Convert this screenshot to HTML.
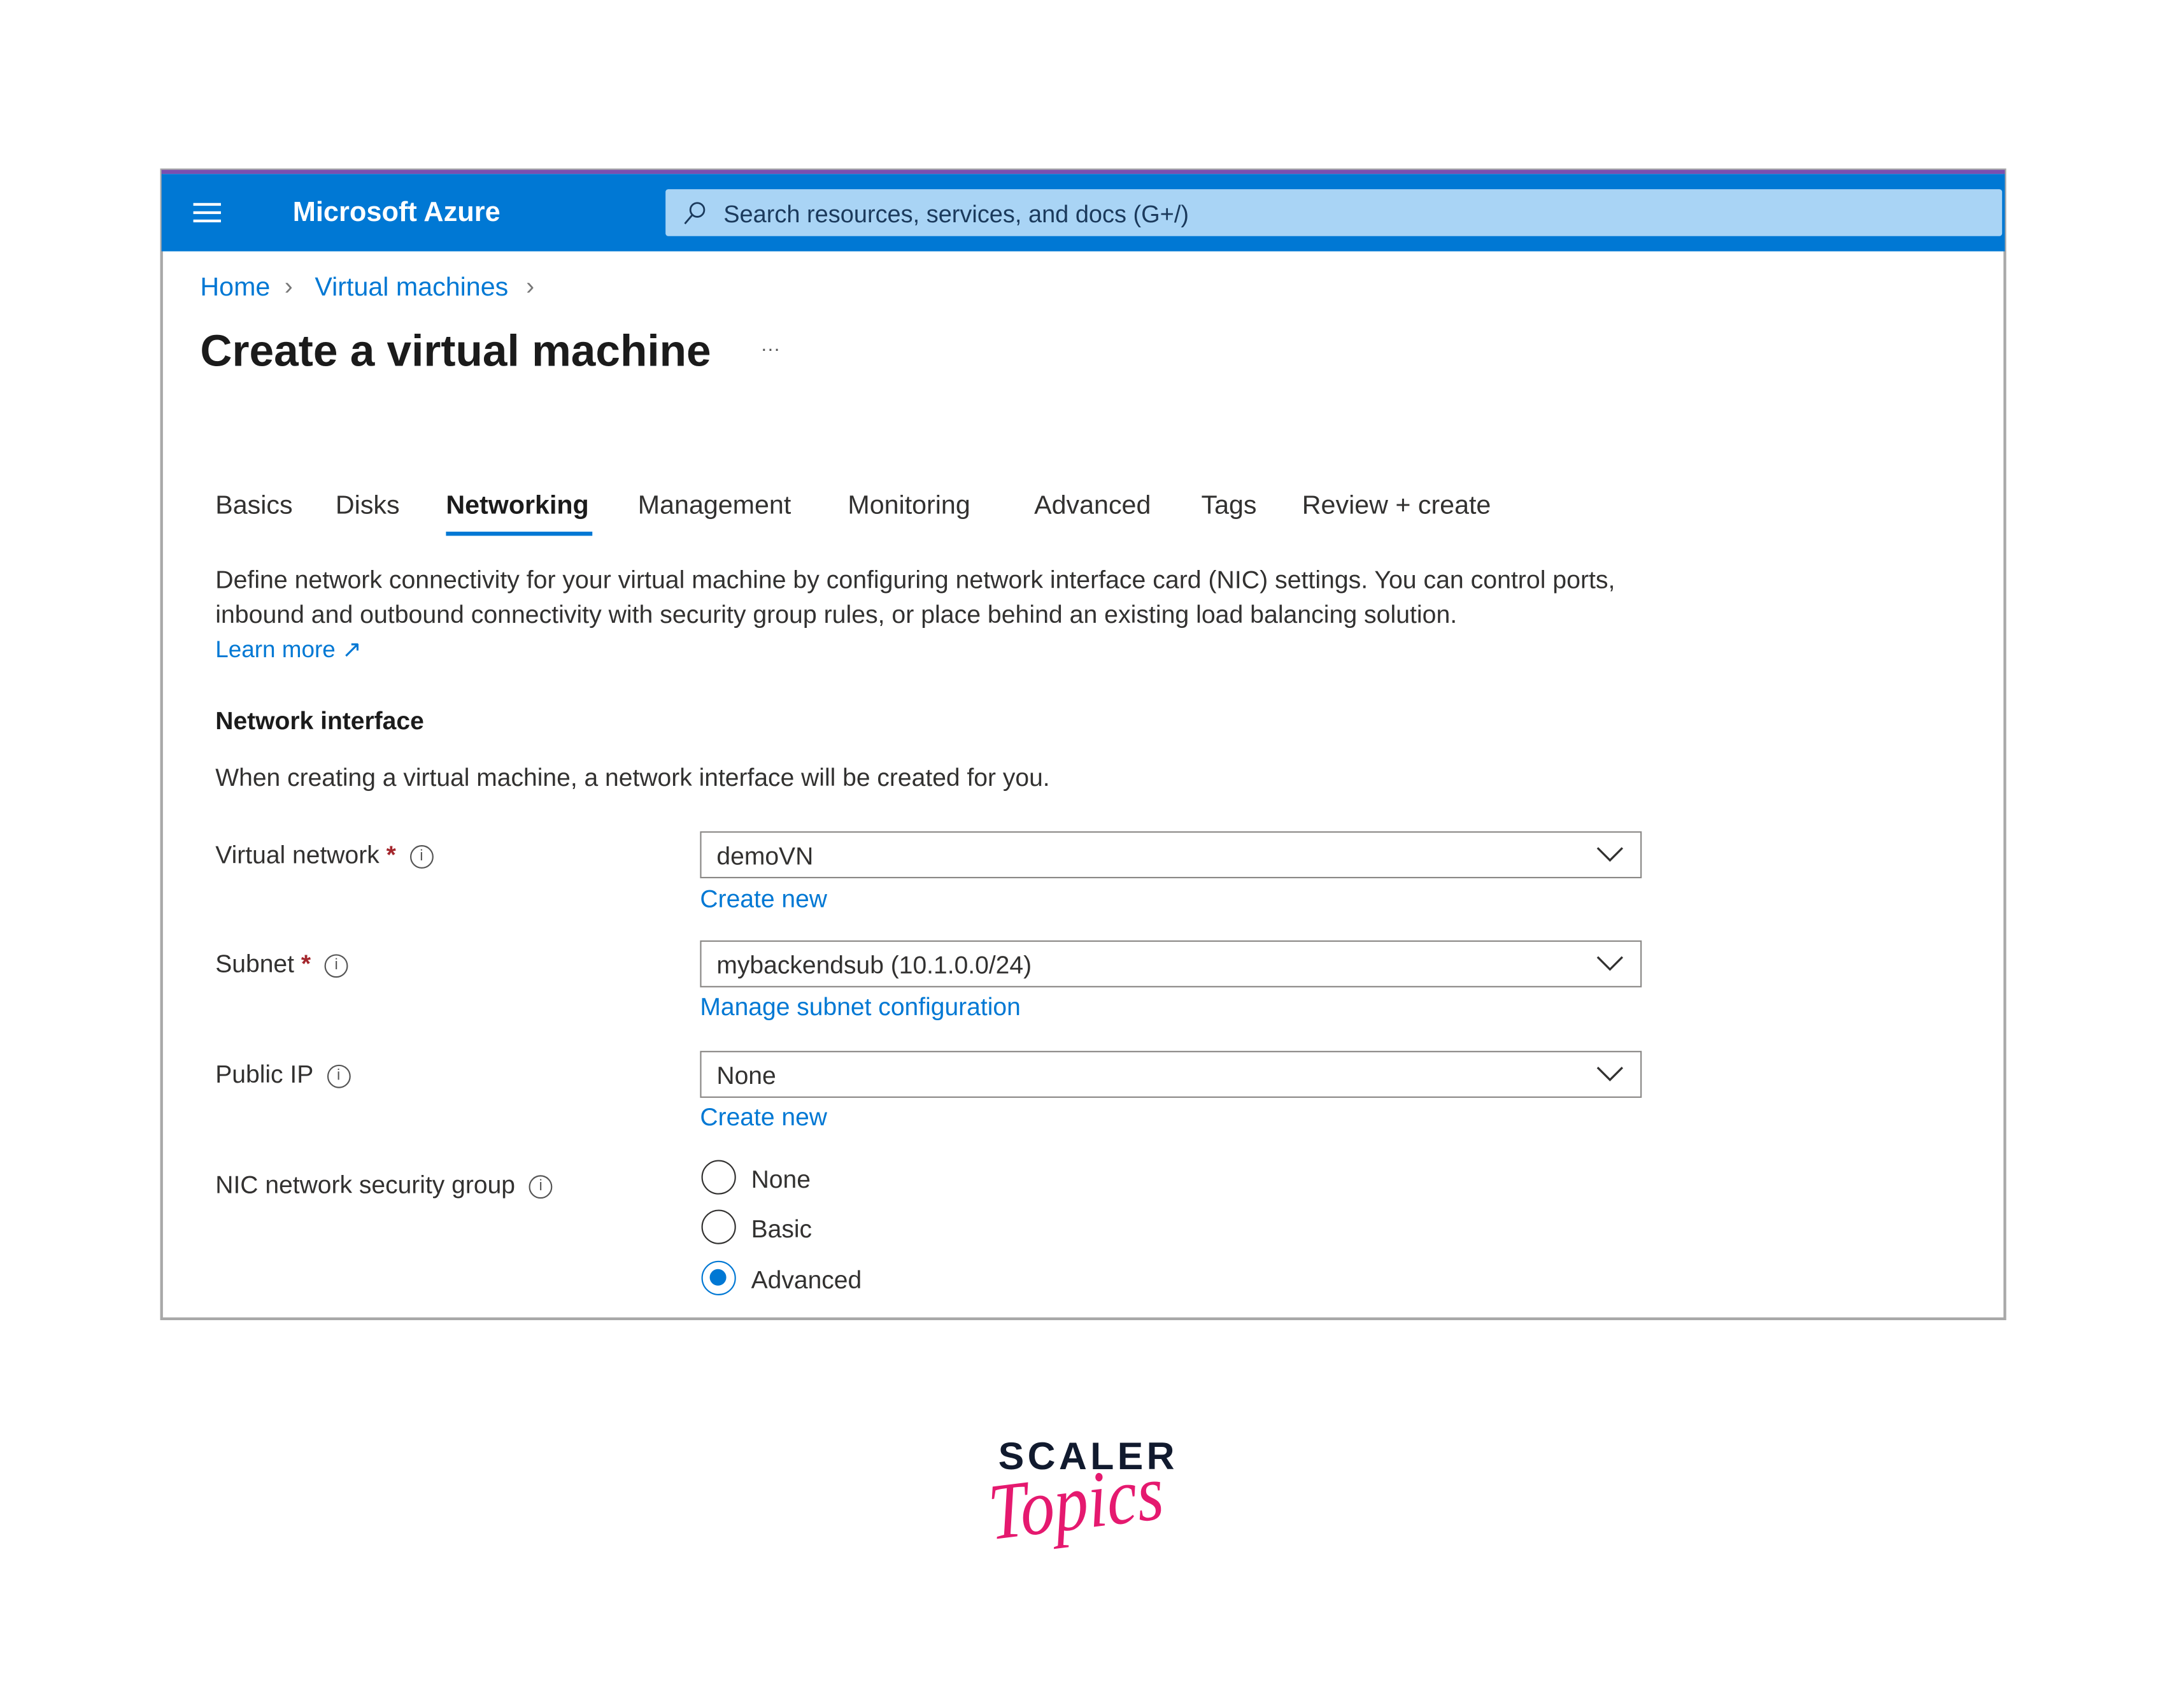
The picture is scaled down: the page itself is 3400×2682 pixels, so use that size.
<!DOCTYPE html>
<html><head><meta charset="utf-8"><style>
*{margin:0;padding:0;box-sizing:border-box}
body{width:3400px;height:2682px;background:#fff;overflow:hidden;font-family:"Liberation Sans",sans-serif}
#s{position:absolute;left:0;top:0;width:1568px;height:1237px;transform:scale(2.1684);transform-origin:0 0}
.a{position:absolute;white-space:nowrap}
.t{color:#323130;font-size:18px;line-height:1}
.l{color:#0078d4}
.dd{position:absolute;left:507px;width:682px;height:34px;border:1px solid #8a8886;background:#fff}
.dd span{position:absolute;left:11px;top:7px;font-size:18px;color:#323130}
.dd svg{position:absolute;right:12px;top:10px}
.ic{display:inline-block;width:17px;height:17px;border:1.3px solid #555;border-radius:50%;font-size:11px;text-align:center;line-height:15px;color:#555;vertical-align:middle}
.r{position:absolute;left:508px;width:25px;height:25px;border:1.5px solid #323130;border-radius:50%}
</style></head><body><div id="s">
<div class="a" style="left:116px;top:122px;width:1337px;height:834px;border:2px solid #a8a8a8"></div>
<div class="a" style="left:117px;top:123px;width:1335px;height:3px;background:#7a4fb0"></div>
<div class="a" style="left:117px;top:126px;width:1335px;height:56px;background:#0078d4"></div>
<div class="a" style="left:140px;top:147px;width:20px;height:2px;background:#fff;box-shadow:0 6px 0 #fff,0 12px 0 #fff"></div>
<div class="a" style="left:212px;top:143px;color:#fff;font-size:20px;font-weight:bold">Microsoft Azure</div>
<div class="a" style="left:482px;top:137px;width:968px;height:34px;background:#a9d4f5;border-radius:2px"></div>
<svg class="a" style="left:493px;top:145px" width="20" height="20" viewBox="0 0 20 20"><circle cx="12" cy="7" r="5" fill="none" stroke="#1b3a5c" stroke-width="1.3"/><path d="M8.5 10.5L3 17" stroke="#1b3a5c" stroke-width="1.3"/></svg>
<div class="a" style="left:524px;top:145px;color:#1b3a5c;font-size:17.5px">Search resources, services, and docs (G+/)</div>
<div class="a l" style="left:145px;top:198px;font-size:19px">Home</div>
<div class="a" style="left:206px;top:197px;font-size:18px;color:#777">›</div>
<div class="a l" style="left:228px;top:198px;font-size:19px">Virtual machines</div>
<div class="a" style="left:381px;top:197px;font-size:18px;color:#777">›</div>
<div class="a" style="left:145px;top:236px;font-size:32px;font-weight:bold;color:#1b1b1b">Create a virtual machine</div>
<div class="a" style="left:551px;top:244px;font-size:14px;color:#555">···</div>
<div class="a t" style="left:156px;top:357px;font-size:19px">Basics</div>
<div class="a t" style="left:243px;top:357px;font-size:19px">Disks</div>
<div class="a t" style="left:323px;top:357px;font-size:19px;color:#1b1b1b;font-weight:bold">Networking</div>
<div class="a" style="left:323px;top:385px;width:106px;height:3px;background:#0078d4"></div>
<div class="a t" style="left:462px;top:357px;font-size:19px">Management</div>
<div class="a t" style="left:614px;top:357px;font-size:19px">Monitoring</div>
<div class="a t" style="left:749px;top:357px;font-size:19px">Advanced</div>
<div class="a t" style="left:870px;top:357px;font-size:19px">Tags</div>
<div class="a t" style="left:943px;top:357px;font-size:19px">Review + create</div>
<div class="a t" style="left:156px;top:411px;font-size:18.1px">Define network connectivity for your virtual machine by configuring network interface card (NIC) settings. You can control ports,</div>
<div class="a t" style="left:156px;top:436px;font-size:18.1px">inbound and outbound connectivity with security group rules, or place behind an existing load balancing solution.</div>
<div class="a l" style="left:156px;top:461px;font-size:17px">Learn more ↗</div>
<div class="a t" style="left:156px;top:513px;font-weight:bold;color:#1b1b1b">Network interface</div>
<div class="a t" style="left:156px;top:554px;font-size:18px">When creating a virtual machine, a network interface will be created for you.</div>
<div class="a t" style="left:156px;top:610px">Virtual network <b style="color:#a4262c">*</b> &nbsp;<span class="ic">i</span></div>
<div class="a t" style="left:156px;top:689px">Subnet <b style="color:#a4262c">*</b> &nbsp;<span class="ic">i</span></div>
<div class="a t" style="left:156px;top:769px">Public IP &nbsp;<span class="ic">i</span></div>
<div class="a t" style="left:156px;top:849px">NIC network security group &nbsp;<span class="ic">i</span></div>
<div class="dd" style="top:602px"><span>demoVN</span><svg width="20" height="12"><path d="M1 1l9 9 9-9" fill="none" stroke="#323130" stroke-width="1.5"/></svg></div>
<div class="dd" style="top:681px"><span>mybackendsub (10.1.0.0/24)</span><svg width="20" height="12"><path d="M1 1l9 9 9-9" fill="none" stroke="#323130" stroke-width="1.5"/></svg></div>
<div class="dd" style="top:761px"><span>None</span><svg width="20" height="12"><path d="M1 1l9 9 9-9" fill="none" stroke="#323130" stroke-width="1.5"/></svg></div>
<div class="a l" style="left:507px;top:641px;font-size:18px">Create new</div>
<div class="a l" style="left:507px;top:719px;font-size:18px">Manage subnet configuration</div>
<div class="a l" style="left:507px;top:799px;font-size:18px">Create new</div>
<div class="r" style="top:840px"></div>
<div class="r" style="top:876px"></div>
<div class="r" style="top:913px;border-color:#0078d4"><div style="position:absolute;left:5px;top:5px;width:12px;height:12px;border-radius:50%;background:#0078d4"></div></div>
<div class="a t" style="left:544px;top:845px">None</div>
<div class="a t" style="left:544px;top:881px">Basic</div>
<div class="a t" style="left:544px;top:918px">Advanced</div>
<div class="a" style="left:723px;top:1039px;font-size:28px;font-weight:bold;color:#111a2e;letter-spacing:2.5px">SCALER</div>
<div class="a" style="left:716px;top:1062px;font-family:'Liberation Serif',serif;font-style:italic;font-size:58px;color:#e5196f;transform:scaleX(0.85) rotate(-6deg);transform-origin:0 50%">Topics</div>
</div></body></html>
